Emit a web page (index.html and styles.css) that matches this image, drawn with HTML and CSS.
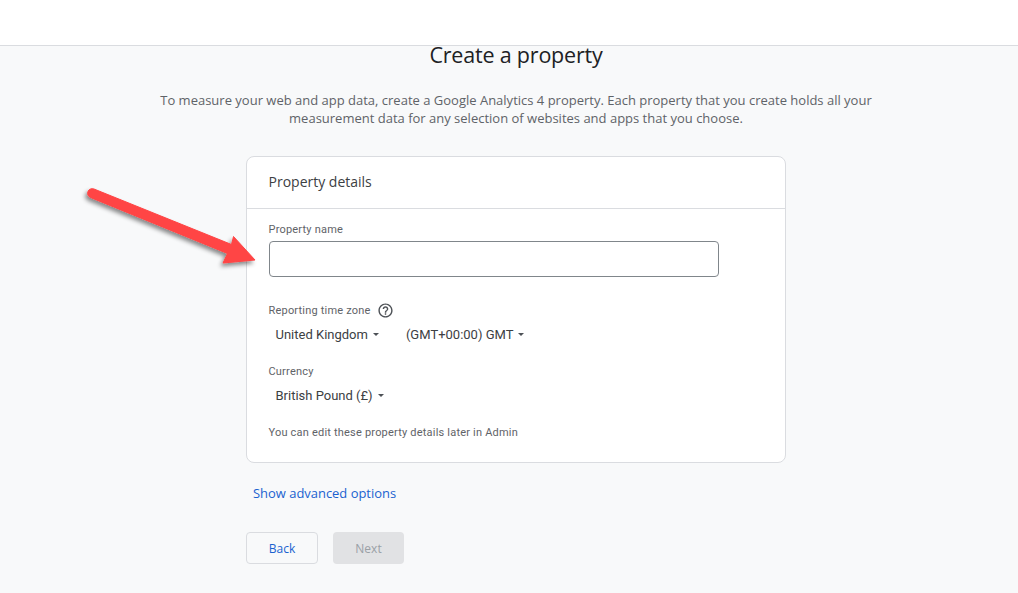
FILE: index.html
```html
<!DOCTYPE html>
<html lang="en">
<head>
<meta charset="utf-8">
<title>Create a property</title>
<link rel="stylesheet" href="styles.css">
</head>
<body>
<header class="topbar"></header>
<main class="page">
  <h1 class="title">Create a property</h1>
  <p class="intro">To measure your web and app data, create a Google Analytics 4 property. Each property that you create holds all your measurement data for any selection of websites and apps that you choose.</p>
  <div class="column">
    <section class="card">
      <h2 class="card-title">Property details</h2>
      <div class="card-body">
        <label class="field-label">Property name</label>
        <div class="text-input"></div>
        <div class="tz-label">
          <span class="field-label-inline">Reporting time zone</span>
          <svg class="help" viewBox="0 0 24 24" width="17" height="17"><path fill="#4d5156" d="M11 18h2v-2h-2v2zm1-16C6.48 2 2 6.48 2 12s4.48 10 10 10 10-4.48 10-10S17.52 2 12 2zm0 18c-4.41 0-8-3.59-8-8s3.59-8 8-8 8 3.59 8 8-3.59 8-8 8zm0-14c-2.21 0-4 1.79-4 4h2c0-1.1.9-2 2-2s2 .9 2 2c0 2-3 1.75-3 5h2c0-2.25 3-2.5 3-5 0-2.21-1.79-4-4-4z"/></svg>
        </div>
        <div class="select-row">
          <span class="select select-country">United Kingdom<i class="caret"></i></span>
          <span class="select">(GMT+00:00) GMT<i class="caret"></i></span>
        </div>
        <div class="currency-label">Currency</div>
        <div class="select-row">
          <span class="select">British Pound (£)<i class="caret"></i></span>
        </div>
        <p class="hint">You can edit these property details later in Admin</p>
      </div>
    </section>
    <a class="advanced">Show advanced options</a>
    <div class="actions">
      <button class="btn btn-back">Back</button>
      <button class="btn btn-next" disabled>Next</button>
    </div>
  </div>
</main>
<svg class="arrow" width="200" height="110" viewBox="0 0 200 110">
  <defs>
    <filter id="sh" x="-20%" y="-30%" width="140%" height="170%">
      <feDropShadow dx="-2" dy="3" stdDeviation="2.2" flood-color="#000" flood-opacity="0.45"/>
    </filter>
  </defs>
  <g filter="url(#sh)">
    <path fill="#ff4444" stroke="#ff4444" stroke-width="1" stroke-linejoin="round" d="M163.5 66.5 L185 90 L153 93 L157.5 83.5 L20.5 27.5 A4.4 4.4 0 0 1 24 19 L161.5 74.5 Z"/>
  </g>
</svg>
</body>
</html>
```
FILE: styles.css
```css
* { box-sizing: border-box; }
html, body { margin: 0; padding: 0; height: 100%; }
body {
  width: 1018px;
  height: 593px;
  overflow: hidden;
  position: relative;
  background: #f8f9fa;
  font-family: Roboto, "Liberation Sans", sans-serif;
  color: #5f6368;
}
.topbar {
  height: 46px;
  background: #fff;
  border-bottom: 1px solid #dadce0;
}
.page {
  display: flex;
  flex-direction: column;
  align-items: center;
  width: 1032px;
}
.title {
  margin: -6px 0 0;
  padding-top: 1px;
  font-family: "Open Sans", sans-serif;
  font-size: 21.5px;
  font-weight: 400;
  line-height: 27px;
  color: #202124;
  letter-spacing: -0.2px;
}
.intro {
  margin: 23px 0 0;
  width: 724px;
  font-family: "Open Sans", sans-serif;
  font-size: 13px;
  line-height: 18px;
  text-align: center;
  color: #5f6368;
}
.column { width: 540px; margin-top: 29px; }
.card {
  background: #fff;
  border: 1px solid #dadce0;
  border-radius: 8px;
  height: 307px;
}
.card-title {
  margin: 0;
  height: 52px;
  padding: 0 21.5px;
  border-bottom: 1px solid #dadce0;
  font-family: "Open Sans", sans-serif;
  font-size: 14px;
  font-weight: 400;
  line-height: 50px;
  color: #3c4043;
}
.card-body { padding: 14px 21px 0 21.5px; }
.field-label {
  display: block;
  font-size: 11px;
  letter-spacing: 0.2px;
  line-height: 13px;
  color: #5f6368;
}
.text-input {
  margin-top: 5px;
  width: 450px;
  height: 36px;
  border: 1px solid #80868b;
  border-radius: 4px;
  background: #fff;
}
.tz-label {
  display: flex;
  align-items: center;
  gap: 6px;
  margin-top: 25px;
  height: 16px;
}
.field-label-inline {
  font-size: 11px;
  letter-spacing: 0.2px;
  color: #5f6368;
}
.select-row {
  display: flex;
  align-items: center;
  margin-top: 7px;
  height: 18px;
  padding-left: 7px;
}
.select {
  display: inline-flex;
  align-items: center;
  font-size: 13px;
  color: #3c4043;
}
.select-country { margin-right: 27px; }
.caret {
  margin-left: 5px;
  margin-top: 1px;
  width: 0;
  height: 0;
  border-left: 3.5px solid transparent;
  border-right: 3.5px solid transparent;
  border-top: 3.5px solid #4d5156;
}
.currency-label {
  margin-top: 22px;
  font-size: 11px;
  line-height: 13px;
  letter-spacing: 0.2px;
  color: #5f6368;
}
.select-row + .currency-label + .select-row { margin-top: 8px; }
.hint {
  margin: 22px 0 0;
  font-size: 11px;
  line-height: 13px;
  letter-spacing: 0.2px;
  color: #5f6368;
}
.advanced {
  display: block;
  margin: 22px 0 0 7px;
  font-family: "Open Sans", sans-serif;
  font-size: 12.95px;
  line-height: 17px;
  color: #1a62d0;
}
.actions { display: flex; gap: 15px; margin-top: 30px; }
.btn {
  height: 32px;
  border-radius: 4px;
  font-family: "Open Sans", sans-serif;
  font-size: 12px;
  font-weight: 500;
  padding: 0;
}
.btn-back {
  width: 72px;
  background: transparent;
  border: 1px solid #dadce0;
  color: #1a62d0;
}
.btn-next {
  width: 71px;
  background: #e1e2e4;
  border: 0;
  color: #9aa0a6;
}
.arrow {
  position: absolute;
  left: 70px;
  top: 170px;
  overflow: visible;
}
```
